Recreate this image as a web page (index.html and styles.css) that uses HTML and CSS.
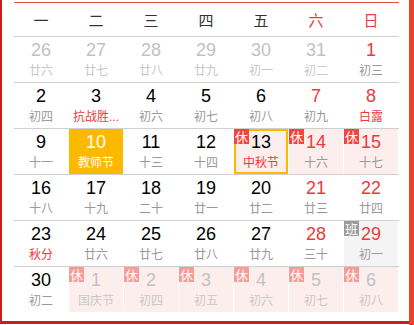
FILE: index.html
```html
<!DOCTYPE html>
<html lang="zh">
<head>
<meta charset="utf-8">
<link rel="stylesheet" href="styles.css">
</head>
<body>
<div class="page">
  <div class="frame">
    <div class="cal">
      <div class="week">
        <span>一</span><span>二</span><span>三</span><span>四</span><span>五</span><span class="we">六</span><span class="we">日</span>
      </div>
      <div class="row">
        <div class="cell faded"><span class="num">26</span><span class="lunar">廿六</span></div>
        <div class="cell faded"><span class="num">27</span><span class="lunar">廿七</span></div>
        <div class="cell faded"><span class="num">28</span><span class="lunar">廿八</span></div>
        <div class="cell faded"><span class="num">29</span><span class="lunar">廿九</span></div>
        <div class="cell faded"><span class="num">30</span><span class="lunar">初一</span></div>
        <div class="cell faded"><span class="num">31</span><span class="lunar">初二</span></div>
        <div class="cell red"><span class="num">1</span><span class="lunar">初三</span></div>
      </div>
      <div class="row">
        <div class="cell"><span class="num">2</span><span class="lunar">初四</span></div>
        <div class="cell"><span class="num">3</span><span class="lunar fest">抗战胜...</span></div>
        <div class="cell"><span class="num">4</span><span class="lunar">初六</span></div>
        <div class="cell"><span class="num">5</span><span class="lunar">初七</span></div>
        <div class="cell"><span class="num">6</span><span class="lunar">初八</span></div>
        <div class="cell red"><span class="num">7</span><span class="lunar">初九</span></div>
        <div class="cell red"><span class="num">8</span><span class="lunar fest">白露</span></div>
      </div>
      <div class="row">
        <div class="cell"><span class="num">9</span><span class="lunar">十一</span></div>
        <div class="cell today"><span class="num">10</span><span class="lunar">教师节</span></div>
        <div class="cell"><span class="num">11</span><span class="lunar">十三</span></div>
        <div class="cell"><span class="num">12</span><span class="lunar">十四</span></div>
        <div class="cell rest selected"><span class="badge">休</span><span class="num">13</span><span class="lunar fest">中秋节</span></div>
        <div class="cell rest red"><span class="badge">休</span><span class="num">14</span><span class="lunar">十六</span></div>
        <div class="cell rest red"><span class="badge">休</span><span class="num">15</span><span class="lunar">十七</span></div>
      </div>
      <div class="row">
        <div class="cell"><span class="num">16</span><span class="lunar">十八</span></div>
        <div class="cell"><span class="num">17</span><span class="lunar">十九</span></div>
        <div class="cell"><span class="num">18</span><span class="lunar">二十</span></div>
        <div class="cell"><span class="num">19</span><span class="lunar">廿一</span></div>
        <div class="cell"><span class="num">20</span><span class="lunar">廿二</span></div>
        <div class="cell red"><span class="num">21</span><span class="lunar">廿三</span></div>
        <div class="cell red"><span class="num">22</span><span class="lunar">廿四</span></div>
      </div>
      <div class="row">
        <div class="cell"><span class="num">23</span><span class="lunar fest">秋分</span></div>
        <div class="cell"><span class="num">24</span><span class="lunar">廿六</span></div>
        <div class="cell"><span class="num">25</span><span class="lunar">廿七</span></div>
        <div class="cell"><span class="num">26</span><span class="lunar">廿八</span></div>
        <div class="cell"><span class="num">27</span><span class="lunar">廿九</span></div>
        <div class="cell red"><span class="num">28</span><span class="lunar">三十</span></div>
        <div class="cell work red"><span class="badge">班</span><span class="num">29</span><span class="lunar">初一</span></div>
      </div>
      <div class="row last">
        <div class="cell"><span class="num">30</span><span class="lunar">初二</span></div>
        <div class="cell rest faded"><span class="badge">休</span><span class="num">1</span><span class="lunar">国庆节</span></div>
        <div class="cell rest faded"><span class="badge">休</span><span class="num">2</span><span class="lunar">初四</span></div>
        <div class="cell rest faded"><span class="badge">休</span><span class="num">3</span><span class="lunar">初五</span></div>
        <div class="cell rest faded"><span class="badge">休</span><span class="num">4</span><span class="lunar">初六</span></div>
        <div class="cell rest faded"><span class="badge">休</span><span class="num">5</span><span class="lunar">初七</span></div>
        <div class="cell rest faded"><span class="badge">休</span><span class="num">6</span><span class="lunar">初八</span></div>
      </div>
    </div>
  </div>
  <div class="strip"></div>
</div>
</body>
</html>
```

FILE: styles.css
```css
* { box-sizing: border-box; }

body {
  margin: 0;
  background: #fff;
  font-family: "Liberation Sans", "Noto Sans CJK SC", sans-serif;
  color: #000;
}

.page {
  display: flex;
  height: 325px;
}

.frame {
  width: 409px;
  height: 324px;
  border-left: 2px solid #c81f1c;
  border-bottom: 3px solid #c81f1c;
  padding: 2px 10px 0 12px;
}

.strip {
  width: 5px;
  height: 325px;
  background: #e4452b;
}

.cal {
  width: 385px;
  border-top: 1px solid #ec4a44;
}

.week {
  display: grid;
  grid-template-columns: repeat(7, 54px);
  column-gap: 1px;
  height: 34px;
  align-items: center;
  justify-items: center;
  border-bottom: 1px solid #cfcfcf;
  font-family: "Noto Sans CJK SC", sans-serif;
  font-size: 15px;
  color: #333;
}

.week .we { color: #ec3a3a; }

.row {
  display: grid;
  grid-template-columns: repeat(7, 54px);
  column-gap: 1px;
  height: 46px;
  border-bottom: 1px solid #cfcfcf;
}

.row.last { border-bottom: none; }

.cell {
  position: relative;
  display: flex;
  flex-direction: column;
  align-items: center;
  padding-top: 3px;
  height: 45px;
}

.num {
  font-size: 18px;
  line-height: 21px;
}

.lunar {
  margin-top: 2px;
  font-family: "Liberation Sans", "Noto Sans CJK SC", sans-serif;
  font-size: 12px;
  line-height: 16px;
  color: #999;
  white-space: nowrap;
}

.red .num { color: #ec3a3a; }
.lunar.fest { color: #ec3a3a; }

.faded .num { color: #c2c2c2; }
.faded .lunar { color: #c8c8c8; }

.rest { background: #fdeeee; }

.today { background: #fdb900; }
.today .num,
.today .lunar { color: #fff; }

.selected { border: 2px solid #fdb900; padding-top: 1px; }
.selected .badge { top: -2px; left: -2px; }

.work { background: #f4f4f4; }

.badge {
  position: absolute;
  top: 0;
  left: 0;
  width: 15px;
  height: 15px;
  background: #f2453d;
  color: #fff;
  font-family: "Noto Sans CJK SC", sans-serif;
  font-size: 13px;
  line-height: 15px;
  text-align: center;
}

.work .badge { background: #9b9b9b; }
.faded .badge { background: #f89a95; }
```
